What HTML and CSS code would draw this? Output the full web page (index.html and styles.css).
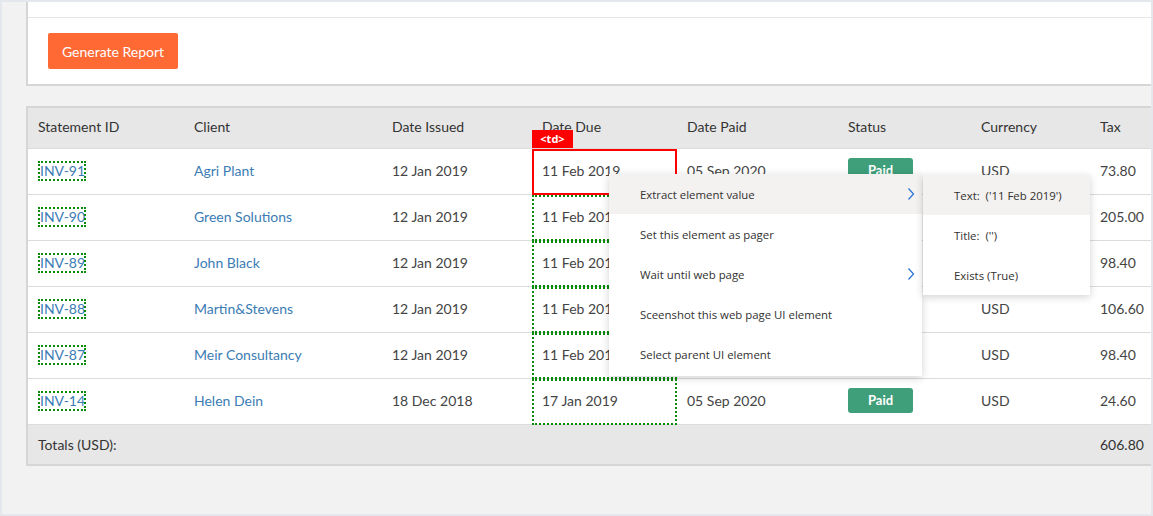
FILE: index.html
```html
<!DOCTYPE html>
<html>
<head>
<meta charset="utf-8">
<link rel="stylesheet" href="styles.css">
</head>
<body>
<div class="frame">
  <section class="card card-top">
    <div class="card-head"></div>
    <div class="card-body">
      <button class="btn-report">Generate Report</button>
    </div>
  </section>

  <section class="card card-table">
    <table class="grid">
      <colgroup>
        <col class="c1"><col class="c2"><col class="c3"><col class="c4"><col class="c5"><col class="c6"><col class="c7"><col class="c8">
      </colgroup>
      <thead>
        <tr class="head-row">
          <th>Statement ID</th><th>Client</th><th>Date Issued</th><th>Date Due</th><th>Date Paid</th><th>Status</th><th>Currency</th><th>Tax</th>
        </tr>
      </thead>
      <tbody>
        <tr>
          <td><span class="inv">INV-91</span></td><td><a class="client">Agri Plant</a></td><td>12 Jan 2019</td>
          <td class="due due-active"><span class="tag">&lt;td&gt;</span>11 Feb 2019</td><td>05 Sep 2020</td>
          <td><span class="badge">Paid</span></td><td>USD</td><td>73.80</td>
        </tr>
        <tr>
          <td><span class="inv">INV-90</span></td><td><a class="client">Green Solutions</a></td><td>12 Jan 2019</td>
          <td class="due">11 Feb 2019</td><td></td><td></td><td></td><td>205.00</td>
        </tr>
        <tr>
          <td><span class="inv">INV-89</span></td><td><a class="client">John Black</a></td><td>12 Jan 2019</td>
          <td class="due">11 Feb 2019</td><td></td><td></td><td></td><td>98.40</td>
        </tr>
        <tr>
          <td><span class="inv">INV-88</span></td><td><a class="client">Martin&amp;Stevens</a></td><td>12 Jan 2019</td>
          <td class="due">11 Feb 2019</td><td></td><td></td><td>USD</td><td>106.60</td>
        </tr>
        <tr>
          <td><span class="inv">INV-87</span></td><td><a class="client">Meir Consultancy</a></td><td>12 Jan 2019</td>
          <td class="due">11 Feb 2019</td><td></td><td></td><td>USD</td><td>98.40</td>
        </tr>
        <tr>
          <td><span class="inv">INV-14</span></td><td><a class="client">Helen Dein</a></td><td>18 Dec 2018</td>
          <td class="due">17 Jan 2019</td><td>05 Sep 2020</td>
          <td><span class="badge">Paid</span></td><td>USD</td><td>24.60</td>
        </tr>
      </tbody>
      <tfoot>
        <tr class="total-row">
          <td colspan="7">Totals (USD):</td><td>606.80</td>
        </tr>
      </tfoot>
    </table>

    <ul class="menu">
      <li class="menu-item active">Extract element value
        <svg class="chev" width="8" height="14" viewBox="0 0 8 14"><polyline points="1.5,1.5 6.5,7 1.5,12.5" fill="none" stroke="#2f76d8" stroke-width="1.3"/></svg>
      </li>
      <li class="menu-item">Set this element as pager</li>
      <li class="menu-item">Wait until web page
        <svg class="chev" width="8" height="14" viewBox="0 0 8 14"><polyline points="1.5,1.5 6.5,7 1.5,12.5" fill="none" stroke="#2f76d8" stroke-width="1.3"/></svg>
      </li>
      <li class="menu-item">Sceenshot this web page UI element</li>
      <li class="menu-item">Select parent UI element</li>
    </ul>

    <ul class="submenu">
      <li class="menu-item active">Text:&nbsp; ('11 Feb 2019')</li>
      <li class="menu-item">Title:&nbsp; ('')</li>
      <li class="menu-item">Exists (True)</li>
    </ul>
  </section>
</div>
</body>
</html>
```

FILE: styles.css
```css
* { box-sizing: border-box; }
html, body { margin: 0; padding: 0; }
body { width: 1153px; height: 516px; overflow: hidden; font-family: "Lato", "Noto Sans", sans-serif; }

.frame {
  width: 1153px;
  height: 516px;
  border: 2px solid #e4e8ec;
  background: #f2f2f2;
  padding-left: 24px;
  display: flex;
  flex-direction: column;
  gap: 20px;
}

.card { background: #fff; border-left: 2px solid #d6d6d6; }

.card-top { border-bottom: 2px solid #d6d6d6; }
.card-head { height: 16px; border-bottom: 1px solid #e6e6e6; }
.card-body { padding: 15px 20px 15px 20px; display: flex; }
.btn-report {
  width: 130px; height: 36px;
  background: #ff6934;
  color: #fff;
  border: none;
  border-radius: 2px;
  font-family: "Lato", sans-serif;
  font-size: 14px;
  padding: 0;
}

.card-table {
  position: relative;
  border-top: 2px solid #d6d6d6;
  border-bottom: 2px solid #d6d6d6;
}

.grid {
  width: 1123px;
  border-collapse: separate;
  border-spacing: 0;
  table-layout: fixed;
  font-size: 14px;
  color: #444;
}
.c1 { width: 156px; } .c2 { width: 198px; } .c3 { width: 150px; } .c4 { width: 145px; }
.c5 { width: 161px; } .c6 { width: 133px; } .c7 { width: 119px; } .c8 { width: 61px; }

.grid th, .grid td {
  padding: 0 0 2px 10px;
  text-align: left;
  white-space: nowrap;
  border-bottom: 1px solid #dcdcdc;
}
.grid th { font-weight: 400; color: #333; background: #e7e7e7; padding-bottom: 4px; }
.head-row { height: 41px; }
.grid tbody tr { height: 46px; }

.inv {
  display: inline-block;
  color: #3b7cb4;
  line-height: 20px;
  padding: 0 1px 0 2px;
  outline: 2px dotted #0a8a0a;
  outline-offset: -2px;
}
.client { color: #3b7cb4; }

.due { position: relative; outline: 2px dotted #0a8a0a; outline-offset: -2px; }
.due-active { outline: 2px solid #f00; z-index: 2; }
.tag {
  position: absolute;
  left: 0; top: -19px;
  width: 41px; height: 18px;
  background: #f00;
  color: #fff;
  font-size: 11px;
  font-weight: 700;
  line-height: 18px;
  text-align: center;
  font-family: "Open Sans", sans-serif;
}

.badge {
  display: inline-block;
  width: 65px; height: 25px;
  line-height: 25px;
  background: #3f9f7a;
  color: #fff;
  text-align: center;
  border-radius: 3px;
  font-size: 13px;
  font-weight: 700;
}

.total-row { height: 39px; }
.total-row td { background: #e7e7e7; border-bottom: none; color: #333; padding-bottom: 0; }

.menu, .submenu {
  position: absolute;
  list-style: none;
  margin: 0;
  padding: 0;
  background: #fff;
  box-shadow: 0 2px 8px rgba(0,0,0,0.18);
  font-family: "Open Sans", "Noto Sans", sans-serif;
  font-size: 11.4px;
  color: #323130;
  z-index: 5;
}
.menu { left: 581px; top: 66px; width: 313px; padding-bottom: 2px; }
.submenu { left: 895px; top: 67px; width: 167px; }
.menu-item {
  height: 40px;
  display: flex;
  align-items: center;
  padding-left: 31px;
  position: relative;
}
.active { background: #f3f2f1; }
.chev { position: absolute; right: 7px; top: 13px; }
```
